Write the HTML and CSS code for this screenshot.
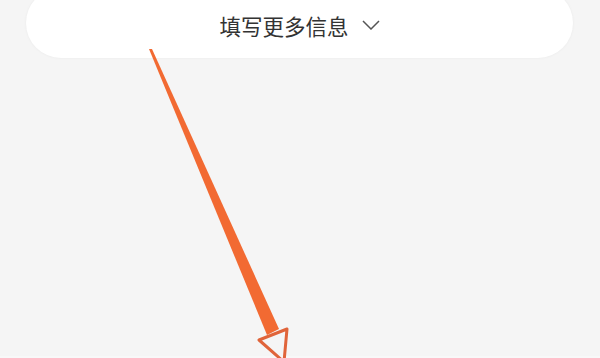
FILE: index.html
```html
<!DOCTYPE html>
<html lang="zh">
<head>
<meta charset="utf-8">
<link rel="stylesheet" href="styles.css">
</head>
<body>
<div class="page">
  <div class="pill">
    <span class="label">填写更多信息</span>
    <svg class="chev" width="18" height="10" viewBox="0 0 18 10"><path d="M1 1 L9 9 L17 1" fill="none" stroke="#555" stroke-width="1.5"/></svg>
  </div>
  <div class="footer-line"></div>
  <svg class="annot" width="600" height="358" viewBox="0 0 600 358">
    <polygon points="149,49 152,49 279,329 267,335" fill="#f26a32"/>
    <polygon points="259,340 287,329 284,362" fill="none" stroke="#e0643a" stroke-width="3" stroke-linejoin="round"/>
  </svg>
</div>
</body>
</html>
```
FILE: styles.css
```css
html, body {
  margin: 0;
  padding: 0;
  background: #f5f5f5;
}
.page {
  position: relative;
  width: 600px;
  height: 358px;
  overflow: hidden;
  display: flex;
  flex-direction: column;
}
.pill {
  margin: -12px 27px 0 26px;
  height: 70px;
  box-sizing: border-box;
  padding-top: 6px;
  border-radius: 35px;
  background: #fff;
  box-shadow: 0 0 3px rgba(0,0,0,0.05);
  display: flex;
  align-items: center;
  justify-content: center;
  gap: 13px;
}
.label {
  font-family: "Noto Sans CJK SC", "Noto Sans", sans-serif;
  font-size: 21.5px;
  color: #333;
  line-height: 1;
}
.chev {
  display: block;
  margin-top: -2px;
}
.footer-line {
  margin-top: auto;
  height: 2px;
  background: #f8f8f8;
}
.annot {
  position: absolute;
  left: 0;
  top: 0;
}
```
